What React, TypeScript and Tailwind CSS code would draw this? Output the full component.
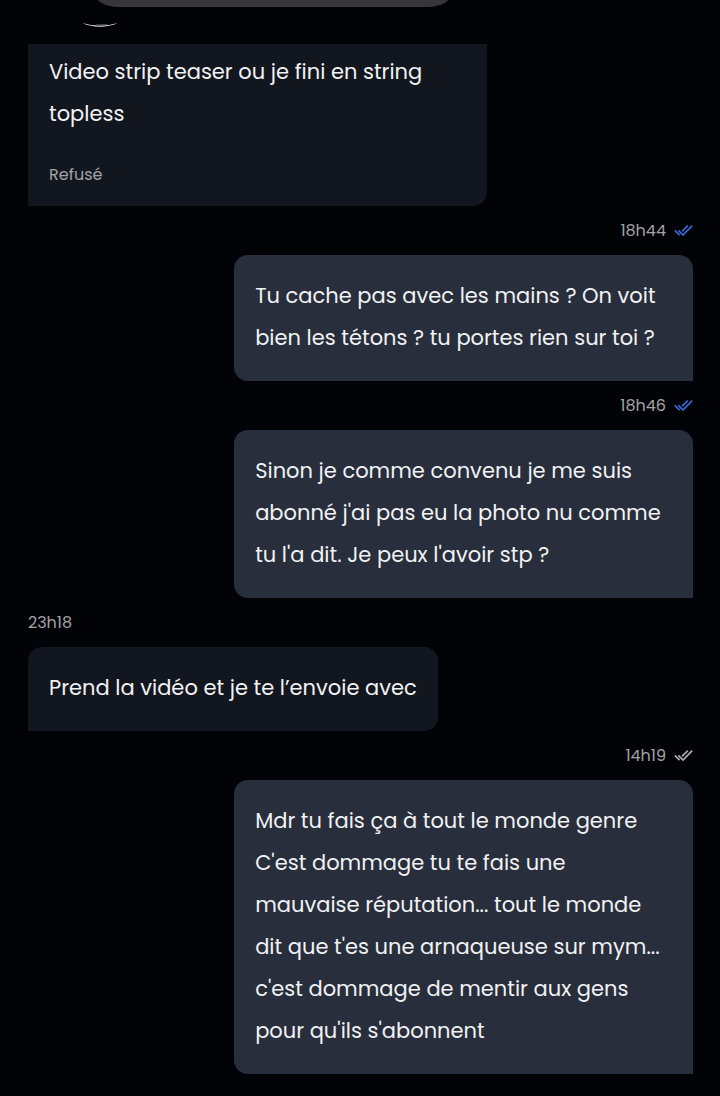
import React from 'react';
import clsx from 'clsx';

type Message = {
  time: string;
  lines: string[];
  sent?: boolean;
  read?: boolean;
};

const MESSAGES: Message[] = [
  {
    time: '18h44',
    sent: true,
    read: true,
    lines: ['Tu cache pas avec les mains ? On voit', 'bien les tétons ? tu portes rien sur toi ?'],
  },
  {
    time: '18h46',
    sent: true,
    read: true,
    lines: ['Sinon je comme convenu je me suis', "abonné j'ai pas eu la photo nu comme", "tu l'a dit. Je peux l'avoir stp ?"],
  },
  {
    time: '23h18',
    lines: ['Prend la vidéo et je te l’envoie avec'],
  },
  {
    time: '14h19',
    sent: true,
    lines: [
      'Mdr tu fais ça à tout le monde genre',
      "C'est dommage tu te fais une",
      'mauvaise réputation... tout le monde',
      "dit que t'es une arnaqueuse sur mym...",
      "c'est dommage de mentir aux gens",
      "pour qu'ils s'abonnent",
    ],
  },
];

function DoubleCheck({ read }: { read?: boolean }) {
  return (
    <svg
      viewBox="0 0 19 13"
      className={clsx('w-[19px] h-[13px]', read ? 'text-[#3a68d4]' : 'text-[#adadaf]')}
      fill="none"
      stroke="currentColor"
      strokeWidth="1.7"
      aria-hidden="true"
    >
      <path d="M0.8 6.4 L5.6 11.2" />
      <path d="M4.4 6.4 L9 11 L18.2 1.6" />
      <path d="M8 7.4 L13.8 1.6" />
    </svg>
  );
}

function Lines({ lines }: { lines: string[] }) {
  return (
    <p className="text-[21px] leading-[42px] text-[#f1f2f4]">
      {lines.map((line) => (
        <span key={line} className="block">{line}</span>
      ))}
    </p>
  );
}

function MessageItem({ time, lines, sent, read }: Message) {
  return (
    <li className={clsx('flex flex-col', sent ? 'items-end' : 'items-start')}>
      <div className="h-[49px] flex items-center gap-2 text-base text-[#a3a3a5]">
        <time>{time}</time>
        {sent && <DoubleCheck read={read} />}
      </div>
      <div
        className={clsx(
          'px-[21px] pt-5 pb-[22px] rounded-t-[14px]',
          sent ? 'w-[69%] rounded-bl-[14px] bg-[#282e3b]' : 'max-w-[69%] rounded-br-[14px] bg-[#12161e]'
        )}
      >
        <Lines lines={lines} />
      </div>
    </li>
  );
}

function App() {
  return (
    <main className="min-h-screen bg-[#020307] font-['Poppins','Inter',sans-serif]">
      <header className="h-11 pl-[82px]">
        <div className="h-[7px] w-[58%] ml-1.5 overflow-hidden flex items-end">
          <div className="h-14 w-full shrink-0 rounded-full bg-[#37373a]" />
        </div>
        <svg viewBox="0 0 36 5" className="mt-4 w-9 h-[5px]" aria-hidden="true">
          <path d="M0 0 Q18 7.6 36 0 Q18 5.2 0 0 Z" fill="#e8e8ec" />
          <path d="M14 1.4 L26 1.2 L24 2.6 L14 2.8 Z" fill="#606168" />
        </svg>
      </header>
      <ul className="pl-7 pr-[27px] pb-[22px]">
        <li className="w-[69%] px-[21px] pt-[7px] pb-[19px] rounded-br-[14px] bg-[#12161e]">
          <Lines lines={['Video strip teaser ou je fini en string', 'topless']} />
          <p className="mt-7 text-base leading-6 text-[#a3a3a5]">Refusé</p>
        </li>
        {MESSAGES.map((message) => (
          <MessageItem key={message.time} {...message} />
        ))}
      </ul>
    </main>
  );
}

export default App;
